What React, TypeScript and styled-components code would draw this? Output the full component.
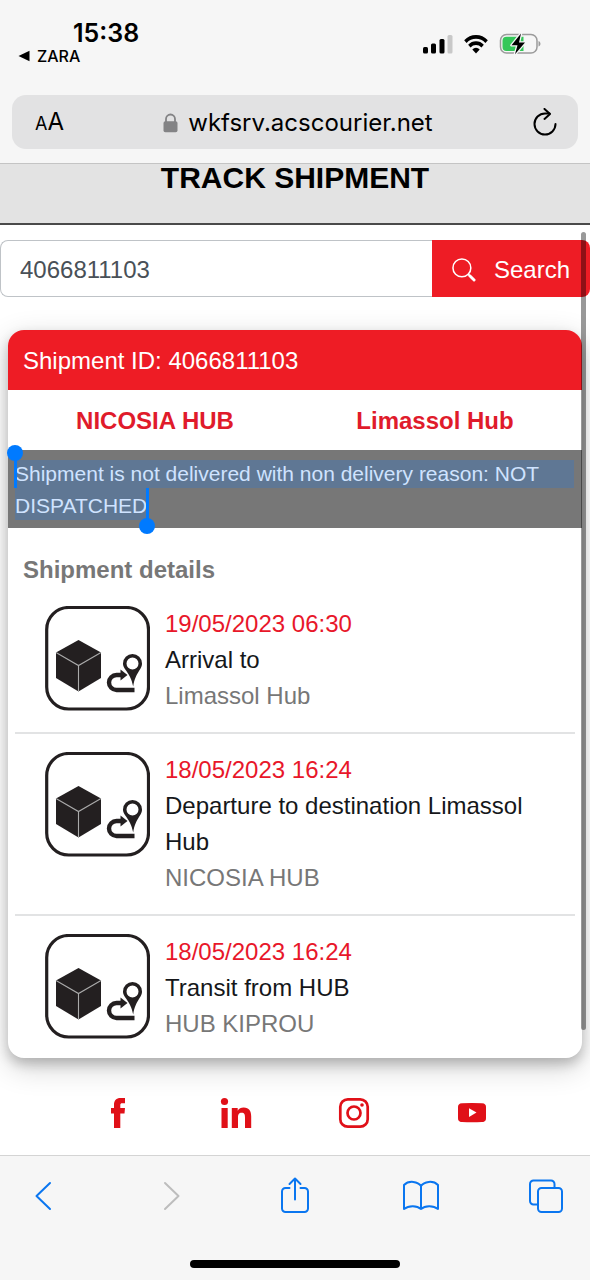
import React, { useState } from 'react';
import styled, { createGlobalStyle } from 'styled-components';

const red = '#ee1c25';
const blue = '#007aff';
const uiFont = "Inter, 'Liberation Sans', sans-serif";

const GlobalStyle = createGlobalStyle`
  *, *::before, *::after { box-sizing: border-box; }
  body {
    margin: 0;
    background: #fff;
    font-family: 'Liberation Sans', Arial, sans-serif;
    font-size: 24px;
    color: #212529;
  }
  button, input { font: inherit; }
  svg { display: block; flex: none; }
`;

const Screen = styled.div`
  min-height: 100vh;
  display: flex;
  flex-direction: column;
`;

const BrowserTop = styled.header`
  background: #f6f6f6;
  border-bottom: 1px solid #c4c4c4;
  padding-bottom: 14px;
  font-family: ${uiFont};
  color: #000;
`;

const StatusBar = styled.div`
  display: flex;
  justify-content: space-between;
  height: 95px;
  padding: 18px 49px 0 18px;
`;

const ClockArea = styled.div`
  display: flex;
  flex-direction: column;
`;

const Clock = styled.time`
  margin-left: 55px;
  font-size: 25px;
  line-height: 30px;
  font-weight: 600;
`;

const BackToApp = styled.a`
  display: flex;
  align-items: center;
  gap: 7px;
  font-size: 16px;
  line-height: 16px;
  font-weight: 500;
  color: #000;
  text-decoration: none;
`;

const Indicators = styled.div`
  display: flex;
  align-items: center;
  gap: 11px;
  height: 52px;
`;

const AddressBar = styled.div`
  display: flex;
  align-items: center;
  justify-content: space-between;
  height: 54px;
  margin: 0 12px;
  padding: 2px 20px 0 23px;
  border-radius: 14px;
  background: #e2e2e3;
`;

const PlainButton = styled.button`
  display: flex;
  align-items: center;
  justify-content: center;
  padding: 0;
  border: 0;
  background: none;
  color: inherit;
`;

const TextSizeButton = styled(PlainButton)`
  align-items: baseline;
  line-height: 30px;
  font-size: 24px;
  small { font-size: 18px; }
`;

const Address = styled(PlainButton)`
  gap: 10px;
  font-size: 24px;
  line-height: 30px;
`;

const Page = styled.main`
  position: relative;
  flex: 1;
`;

const ScrollThumb = styled.div`
  position: absolute;
  top: 68px;
  right: 4px;
  bottom: 125px;
  width: 5px;
  border-radius: 3px;
  background: rgba(0, 0, 0, 0.4);
`;

const TitleBand = styled.div`
  height: 61px;
  background: #e3e3e3;
  border-bottom: 2px solid #4a4a4a;
  text-align: center;
`;

const Title = styled.h1`
  margin: 0;
  font-size: 30px;
  line-height: 27px;
  color: #000;
`;

const SearchForm = styled.form`
  display: flex;
  height: 57px;
  margin: 15px 0 33px;
`;

const SearchInput = styled.input`
  flex: 1;
  min-width: 0;
  padding: 2px 19px 0;
  border: 1px solid #bfc3c7;
  border-right: 0;
  border-radius: 8px 0 0 8px;
  background: #fff;
  color: #495057;
`;

const SearchButton = styled.button`
  display: flex;
  align-items: center;
  gap: 18px;
  padding: 2px 20px 0;
  border: 0;
  border-radius: 0 8px 8px 0;
  background: ${red};
  color: #fff;
`;

const Card = styled.section`
  margin: 0 8px;
  padding-bottom: 16px;
  border-radius: 16px;
  background: #fff;
  box-shadow: 0 6px 12px rgba(0, 0, 0, 0.2), 0 9px 30px rgba(0, 0, 0, 0.19);
`;

const CardHeader = styled.h2`
  margin: 0;
  padding: 2px 15px 0;
  border-radius: 16px 16px 0 0;
  background: ${red};
  color: #fff;
  font-size: 24px;
  font-weight: 400;
  line-height: 58px;
`;

const Route = styled.div`
  display: grid;
  grid-template-columns: 1fr 1fr;
  padding: 2px 7px 0;
  line-height: 58px;
  text-align: center;
  font-weight: 700;
  color: #e01b2b;
`;

const Notice = styled.p`
  margin: 0;
  min-height: 78px;
  padding: 10px 8px 8px 7px;
  background: #777;
  color: #cfe3ff;
  font-size: 21px;
  line-height: 28px;
`;

const Selected = styled.span<{ $last?: boolean }>`
  position: relative;
  display: block;
  width: ${(p) => (p.$last ? 'fit-content' : 'auto')};
  padding-top: ${(p) => (p.$last ? 4 : 0)}px;
  background: #5f7794;
`;

const Handle = styled.i<{ $end?: boolean }>`
  position: absolute;
  top: ${(p) => (p.$end ? '0' : '-8px')};
  bottom: ${(p) => (p.$end ? '-8px' : '0')};
  ${(p) => (p.$end ? 'right: -2px' : 'left: -1px')};
  width: 3px;
  background: ${blue};
  &::after {
    content: '';
    position: absolute;
    left: -7px;
    ${(p) => (p.$end ? 'bottom: -6px' : 'top: -7px')};
    width: 16px;
    height: 16px;
    border-radius: 50%;
    background: ${blue};
  }
`;

const DetailsHeading = styled.h3`
  margin: 0;
  padding: 24px 15px 0;
  font-size: 24px;
  line-height: 36px;
  color: #777;
`;

const Events = styled.ol`
  list-style: none;
  margin: 0 7px;
  padding: 0;
`;

const EventRow = styled.li`
  display: flex;
  align-items: flex-start;
  gap: 15px;
  padding: 18px 8px 18px 30px;
  line-height: 36px;
  & + & { border-top: 2px solid #e2e3e4; }
  &:last-child { padding-bottom: 0; }
`;

const EventText = styled.div`
  flex: 1;
`;

const EventDate = styled.time`
  display: block;
  color: #e8172a;
`;

const EventName = styled.div`
  color: #15171a;
`;

const EventPlace = styled.div`
  color: #777;
`;

const Social = styled.nav`
  display: grid;
  grid-template-columns: repeat(4, 1fr);
  justify-items: center;
  padding: 39px 10% 26px;
  color: #e01018;
  a { color: inherit; }
`;

const BrowserBottom = styled.footer`
  height: 125px;
  padding: 20px 27px 12px;
  display: flex;
  flex-direction: column;
  justify-content: space-between;
  align-items: center;
  background: #f6f6f6;
  border-top: 1px solid #d4d4d4;
`;

const Toolbar = styled.div`
  align-self: stretch;
  display: flex;
  justify-content: space-between;
  color: #0a76f0;
`;

const ToolButton = styled(PlainButton)`
  width: 34px;
  height: 40px;
  &:disabled { color: #bdbdbd; }
`;

const HomeIndicator = styled.div`
  width: 210px;
  height: 8px;
  border-radius: 4px;
  background: #000;
`;

const SignalIcon = () => (
  <svg width="30" height="20" viewBox="0 0 30 20">
    <rect x="0" y="13" width="5" height="6.5" rx="1.5" />
    <rect x="8" y="9.5" width="5" height="10" rx="1.5" />
    <rect x="16.5" y="5" width="5" height="14.5" rx="1.5" />
    <rect x="24.5" y="1" width="5" height="18.5" rx="1.5" fill="#c8c8c8" />
  </svg>
);

const WifiIcon = () => (
  <svg width="24" height="20" viewBox="0 0 26 20" preserveAspectRatio="none" fill="none" stroke="#000" strokeWidth="3.7">
    <path d="M1.5 7.6a16.4 16.4 0 0 1 23 0" />
    <path d="M5.8 12.1a10.4 10.4 0 0 1 14.4 0" />
    <path d="M9 15.4a6 6 0 0 1 8 0L13 19.6z" fill="#000" stroke="none" />
  </svg>
);

const BatteryIcon = () => (
  <svg width="42" height="22" viewBox="0 0 42 22">
    <rect x="1.500" y="1.500" width="36.500" height="18.500" rx="6" fill="none" stroke="#9b9b9b" strokeWidth="1.5" />
    <path d="M39.500 8c2.600.8 2.600 4.800 0 5.600z" fill="#9b9b9b" />
    <path d="M7.500 3.700h17v14.200h-17a4 4 0 0 1-4-4V7.700a4 4 0 0 1 4-4z" fill="#34c759" />
    <path d="M22 .5 12.500 12.200h6l-2.500 9 10-11.700h-6z" fill="#000" stroke="#f6f6f6" strokeWidth="2.600" paintOrder="stroke" strokeLinejoin="round" />
  </svg>
);

const LockIcon = () => (
  <svg width="15" height="20" viewBox="0 0 15 20">
    <path d="M3 10V6a4.500 4.500 0 0 1 9 0v4" fill="none" stroke="#838385" strokeWidth="1.800" />
    <rect x="0.500" y="8.300" width="14" height="11" rx="1.800" fill="#838385" />
  </svg>
);

const ReloadIcon = () => (
  <svg width="26" height="30" viewBox="0 0 26 30" fill="none" stroke="#000" strokeWidth="2" strokeLinecap="round" strokeLinejoin="round">
    <path d="M23.500 16A10.500 10.500 0 1 1 13 5.500h4.500" />
    <path d="m12.500.900 5.500 5-5.500 5" />
  </svg>
);

const SearchIcon = () => (
  <svg width="24" height="24" viewBox="0 0 25 25" fill="none" stroke="#fff" strokeLinecap="round">
    <circle cx="10.300" cy="10.300" r="9.300" strokeWidth="1.600" />
    <path d="m17 17 2 2" strokeWidth="1.600" />
    <path d="m18.500 18.500 4.500 4.500" strokeWidth="3" />
  </svg>
);

const ParcelIcon = () => (
  <svg width="105" height="105" viewBox="0 0 105 105" aria-hidden="true">
    <rect x="1.700" y="1.500" width="101.800" height="101.500" rx="22" fill="#fff" stroke="#231f20" strokeWidth="3.200" />
    <path d="M33.500 34 56 46.500V72L33.500 85.500 11 72V46.500z" fill="#231f20" />
    <path d="m11 46.500 22.500 13 22.500-13M33.500 59.500v26" fill="none" stroke="#aaa" strokeWidth="1.100" />
    <path d="M89.500 84H71.500a7.500 7.500 0 0 1 0-15H76" fill="none" stroke="#231f20" strokeWidth="4.400" />
    <path d="m75.500 63.500 7 5.500-7 5.500z" fill="#231f20" />
    <path fillRule="evenodd" d="M87.500 48a9.500 9.500 0 0 1 9.500 9.500c0 6.500-6.500 8.500-8.800 23-2.700-14.500-10.200-16.500-10.200-23a9.500 9.500 0 0 1 9.500-9.500zm0 3.500a6 6 0 1 0 0 12 6 6 0 0 0 0-12z" fill="#231f20" />
  </svg>
);

const FacebookIcon = () => (
  <svg width="32" height="32" viewBox="0 0 32 32" fill="currentColor">
    <path d="M12 31V16.500H9V11h3V8c0-4.700 2.300-7 6.500-7H23v5.200h-2.700c-1.500 0-2 .6-2 2V11H23l-.5 5.500h-4.200V31z" />
  </svg>
);

const LinkedInIcon = () => (
  <svg width="32" height="32" viewBox="0 0 32 32" fill="currentColor">
    <circle cx="4.500" cy="4.500" r="3.600" />
    <path d="M1.500 11h6.200v20H1.500zM11.800 11h5.900v2.700c1.200-2 3.300-3.200 6-3.200 5.500 0 7.500 3.600 7.500 9V31H25V20.500c0-2.700-.5-4.700-3.300-4.700-2.900 0-3.700 2-3.700 4.600V31h-6.200z" />
  </svg>
);

const InstagramIcon = () => (
  <svg width="32" height="32" viewBox="0 0 32 32" fill="none" stroke="currentColor" strokeWidth="2.700">
    <rect x="2.300" y="2.300" width="27.400" height="27.400" rx="7.500" />
    <circle cx="16" cy="16" r="6.500" />
    <circle cx="24" cy="8" r="1.800" fill="currentColor" stroke="none" />
  </svg>
);

const YouTubeIcon = () => (
  <svg width="32" height="32" viewBox="0 0 32 32">
    <path d="M6 6.300q10-.6 20 0c3 .2 4 1.500 4 4v10.500c0 3-1 4-4 4.300q-10 .5-20 0c-3-.3-4-1.300-4-4.300V10.300c0-2.500 1-3.800 4-4z" fill="currentColor" />
    <path d="m13 11.300 7.500 4.300-7.500 4.500z" fill="#fff" />
  </svg>
);

const lineIcon = {
  fill: 'none',
  stroke: 'currentColor',
  strokeWidth: 2,
  strokeLinecap: 'round' as const,
  strokeLinejoin: 'round' as const,
};

const BackIcon = () => (
  <svg width="34" height="36" viewBox="0 0 34 36" {...lineIcon}><path d="M23 5 9.500 18 23 31" /></svg>
);
const ForwardIcon = () => (
  <svg width="34" height="36" viewBox="0 0 34 36" {...lineIcon}><path d="m12 5 13.500 13L12 31" /></svg>
);
const ShareIcon = () => (
  <svg width="34" height="40" viewBox="0 0 34 40" {...lineIcon}>
    <path d="M11.500 12H7.500A3.500 3.500 0 0 0 4 15.500V32.500A3.500 3.500 0 0 0 7.500 36h19a3.500 3.500 0 0 0 3.500-3.500V15.500A3.500 3.500 0 0 0 26.500 12h-4M17 23.500V2.500M11.500 8 17 2.500 22.500 8" />
  </svg>
);
const BookIcon = () => (
  <svg width="36" height="32" viewBox="0 0 36 32" {...lineIcon}>
    <path d="M18 6C15 1.500 6 0 1 5v24c5-4 13-3.500 17 0 4-3.500 12-4 17 0V5C30 0 21 1.500 18 6zM18 6v23" />
  </svg>
);
const TabsIcon = () => (
  <svg width="34" height="34" viewBox="0 0 34 34" {...lineIcon}>
    <rect x="9" y="9" width="24" height="24" rx="3.500" />
    <path d="M8.500 25.500h-4A3.500 3.500 0 0 1 1 22V5a3.500 3.500 0 0 1 3.500-3.500H22A3.500 3.500 0 0 1 25.500 5v3.500" />
  </svg>
);

const events = [
  { date: '19/05/2023 06:30', name: 'Arrival to', place: 'Limassol Hub' },
  { date: '18/05/2023 16:24', name: 'Departure to destination Limassol Hub', place: 'NICOSIA HUB' },
  { date: '18/05/2023 16:24', name: 'Transit from HUB', place: 'HUB KIPROU' },
];

export default function App() {
  const [query, setQuery] = useState('4066811103');

  return (
    <Screen>
      <GlobalStyle />
      <BrowserTop>
        <StatusBar>
          <ClockArea>
            <Clock>15:38</Clock>
            <BackToApp href="#">
              <svg width="12" height="12" viewBox="0 0 12 12"><path d="M11.500.8v10.400L.5 6z" /></svg>
              ZARA
            </BackToApp>
          </ClockArea>
          <Indicators>
            <SignalIcon />
            <WifiIcon />
            <BatteryIcon />
          </Indicators>
        </StatusBar>
        <AddressBar>
          <TextSizeButton><small>A</small>A</TextSizeButton>
          <Address><LockIcon />wkfsrv.acscourier.net</Address>
          <PlainButton aria-label="Reload"><ReloadIcon /></PlainButton>
        </AddressBar>
      </BrowserTop>

      <Page>
        <TitleBand><Title>TRACK SHIPMENT</Title></TitleBand>
        <SearchForm onSubmit={(e) => e.preventDefault()}>
          <SearchInput aria-label="Shipment number" value={query} onChange={(e) => setQuery(e.target.value)} />
          <SearchButton type="submit"><SearchIcon />Search</SearchButton>
        </SearchForm>

        <Card>
          <CardHeader>Shipment ID: 4066811103</CardHeader>
          <Route><span>NICOSIA HUB</span><span>Limassol Hub</span></Route>
          <Notice>
            <Selected>Shipment is not delivered with non delivery reason: NOT<Handle /></Selected>
            <Selected $last>DISPATCHED<Handle $end /></Selected>
          </Notice>
          <DetailsHeading>Shipment details</DetailsHeading>
          <Events>
            {events.map((event) => (
              <EventRow key={event.name}>
                <ParcelIcon />
                <EventText>
                  <EventDate>{event.date}</EventDate>
                  <EventName>{event.name}</EventName>
                  <EventPlace>{event.place}</EventPlace>
                </EventText>
              </EventRow>
            ))}
          </Events>
        </Card>

        <Social aria-label="Social media">
          <a href="#" aria-label="Facebook"><FacebookIcon /></a>
          <a href="#" aria-label="LinkedIn"><LinkedInIcon /></a>
          <a href="#" aria-label="Instagram"><InstagramIcon /></a>
          <a href="#" aria-label="YouTube"><YouTubeIcon /></a>
        </Social>
        <ScrollThumb />
      </Page>

      <BrowserBottom>
        <Toolbar>
          <ToolButton aria-label="Back"><BackIcon /></ToolButton>
          <ToolButton aria-label="Forward" disabled><ForwardIcon /></ToolButton>
          <ToolButton aria-label="Share"><ShareIcon /></ToolButton>
          <ToolButton aria-label="Bookmarks"><BookIcon /></ToolButton>
          <ToolButton aria-label="Tabs"><TabsIcon /></ToolButton>
        </Toolbar>
        <HomeIndicator />
      </BrowserBottom>
    </Screen>
  );
}
